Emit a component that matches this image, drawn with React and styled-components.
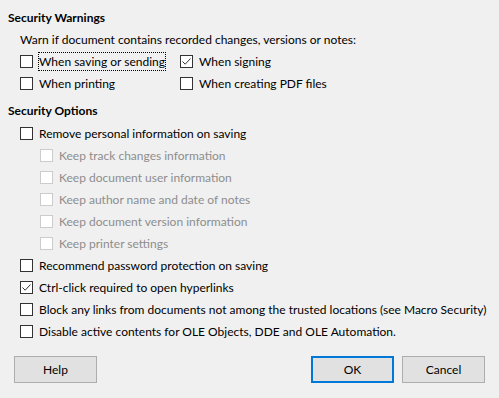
import React from 'react'
import styled, { createGlobalStyle } from 'styled-components'

const Global = createGlobalStyle`
html, body {
  margin: 0;
  padding: 0;
  background: #f0f0f0;
}
body {
  font-family: Lato, "Liberation Sans", sans-serif;
  font-size: 12px;
  color: #000;
}
`

const CheckIcon = () => (
  <svg width="11" height="11" viewBox="0 0 11 11">
    <polyline points="1.5,5.5 4.2,8.2 9.5,2.5" fill="none" stroke="#333" strokeWidth="1" />
  </svg>
)

const Check = ({ checked, disabled, focus, children }) => (
  <Row>
    <Box disabled={disabled}>{checked && <CheckIcon />}</Box>
    <Label disabled={disabled} focus={focus}>{children}</Label>
  </Row>
)

const App = () => {
  return (
    <Dialog>
      <Global />
      <Heading>Security Warnings</Heading>
      <Section>
        <Line>Warn if document contains recorded changes, versions or notes:</Line>
        <Grid>
          <Check focus>When saving or sending</Check>
          <Check checked>When signing</Check>
          <Check>When printing</Check>
          <Check>When creating PDF files</Check>
        </Grid>
      </Section>
      <Heading top="6px">Security Options</Heading>
      <Section>
        <Check>Remove personal information on saving</Check>
        <Sub>
          <Check disabled>Keep track changes information</Check>
          <Check disabled>Keep document user information</Check>
          <Check disabled>Keep author name and date of notes</Check>
          <Check disabled>Keep document version information</Check>
          <Check disabled>Keep printer settings</Check>
        </Sub>
        <Check>Recommend password protection on saving</Check>
        <Check checked>Ctrl-click required to open hyperlinks</Check>
        <Check>Block any links from documents not among the trusted locations (see Macro Security)</Check>
        <Check>Disable active contents for OLE Objects, DDE and OLE Automation.</Check>
      </Section>
      <Buttons>
        <Button>Help</Button>
        <Spacer />
        <Button primary>OK</Button>
        <Button>Cancel</Button>
      </Buttons>
    </Dialog>
  )
}

const Dialog = styled.div`
width: 499px;
height: 398px;
box-sizing: border-box;
padding: 7px 0 0 8px;
display: flex;
flex-direction: column;
`

const Heading = styled.div`
font-weight: bold;
height: 22px;
line-height: 22px;
margin-top: ${p => p.top || '0'};
`

const Section = styled.div`
padding-left: 12px;
display: flex;
flex-direction: column;
`

const Line = styled.div`
height: 21px;
line-height: 21px;
`

const Grid = styled.div`
display: grid;
grid-template-columns: 160px auto;
`

const Sub = styled.div`
padding-left: 20px;
display: flex;
flex-direction: column;
`

const Row = styled.div`
display: flex;
align-items: center;
height: 22px;
`

const Box = styled.span`
width: 13px;
height: 13px;
box-sizing: border-box;
border: 1px solid ${p => (p.disabled ? '#cccccc' : '#333333')};
background: #fff;
margin-right: 5px;
display: flex;
align-items: center;
justify-content: center;
flex: none;
`

const Label = styled.span`
color: ${p => (p.disabled ? '#8d8d8d' : '#000')};
white-space: nowrap;
padding: 1px 0;
border: 1px dotted ${p => (p.focus ? '#000' : 'transparent')};
line-height: 15px;
`

const Buttons = styled.div`
display: flex;
gap: 8px;
margin-top: 14px;
padding: 0 14px 0 6px;
`

const Spacer = styled.div`
flex: 1;
`

const Button = styled.button`
width: 83px;
height: 27px;
box-sizing: border-box;
background: #e1e1e1;
border: ${p => (p.primary ? '2px solid #0078d7' : '1px solid #adadad')};
font-family: Lato, "Liberation Sans", sans-serif;
font-size: 12px;
color: #000;
padding: 0;
`

export default App
